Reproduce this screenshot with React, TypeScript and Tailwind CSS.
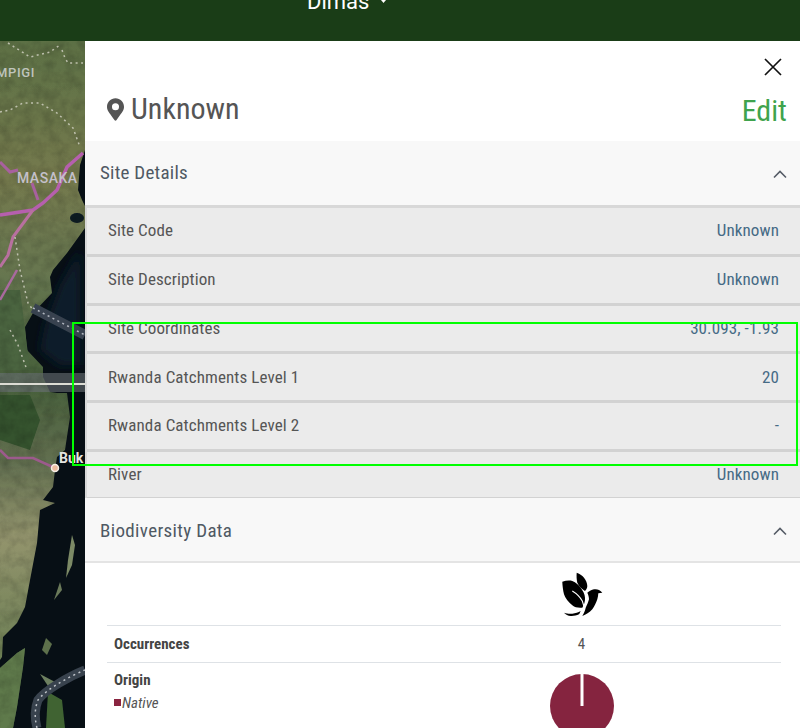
import React from "react";

function Row({ label, value, last }: { label: string; value: string; last?: boolean }) {
  return (
    <div
      className={
        last
          ? "flex h-[46px] items-center justify-between border-b border-[#d2d2d2] bg-[#ebebeb] px-[21px]"
          : "flex h-[48.8px] items-center justify-between border-b-[3px] border-[#d2d2d2] bg-[#ebebeb] px-[21px]"
      }
    >
      <span className="text-[17px] tracking-[0.1px] text-[#555]">{label}</span>
      <span className="text-[17px] tracking-[0.1px] text-[#456a85]">{value}</span>
    </div>
  );
}

function Chevron() {
  return (
    <svg width="16" height="10" viewBox="0 0 16 10" fill="none" stroke="#555c66" strokeWidth="1.6">
      <path d="M2 8.5 L8 2.5 L14 8.5" />
    </svg>
  );
}

const LAND =
  "M0 41H85V150L80 165 78 190 82 200 85 206V228L67 253 53 270 50 277 52 293 33 313 25 327 27 350 43 367 43 377 50 392 57 393 67 393 70 417 68 430 65 450 57 457 55 470 53 487 43 500 55 503 40 510 37 543 30 580 25 607 17 623 3 637 2 657 0 660Z";
const LAND2 = "M0 668L17 653 25 648 23 667 17 707 13 728H0Z";

function MapArt() {
  return (
    <svg width="85" height="687" viewBox="0 41 85 687" className="block shrink-0">
      <defs>
        <filter id="soft" x="-5%" y="-5%" width="110%" height="110%">
          <feGaussianBlur stdDeviation="0.7" />
        </filter>
        <filter id="softer" x="-20%" y="-20%" width="140%" height="140%">
          <feGaussianBlur stdDeviation="5" />
        </filter>
        <filter id="noise" x="0" y="0" width="100%" height="100%">
          <feTurbulence type="fractalNoise" baseFrequency="0.09" numOctaves="4" seed="5" />
          <feColorMatrix values="0 0 0 0 0  0 0 0 0 0  0 0 0 0 0  1.6 0 0 0 -0.55" />
        </filter>
        <clipPath id="landClip">
          <path d={LAND} />
          <path d={LAND2} />
        </clipPath>
        <linearGradient id="landGrad" x1="0" y1="0" x2="0" y2="1">
          <stop offset="0" stopColor="#5c7044" />
          <stop offset="0.22" stopColor="#757a4e" />
          <stop offset="0.38" stopColor="#667650" />
          <stop offset="0.55" stopColor="#465f3a" />
          <stop offset="0.68" stopColor="#626f50" />
          <stop offset="0.8" stopColor="#93946d" />
          <stop offset="1" stopColor="#6c7f54" />
        </linearGradient>
      </defs>
      <rect x="0" y="41" width="85" height="687" fill="#070f15" />
      <path d="M80 250 L60 285 45 325 40 350 60 365 80 365Z" fill="#0b1e2a" filter="url(#softer)" />
      <g filter="url(#soft)">
        <path d={LAND} fill="url(#landGrad)" />
        <path d={LAND2} fill="#66805099" />
        <path d="M0 668L17 653 25 648 23 667 17 707 13 728H0Z" fill="#5f7a4c" />
        <path d="M0 395H30L40 420 30 450 0 440Z" fill="#35522f" />
        <path d="M0 290H20L25 330 30 370H0Z" fill="#4b6541" />
        <path d="M48 692L62 700 65 728H46Z" fill="#3f6333" />
        <ellipse cx="77" cy="218" rx="7" ry="5" fill="#0d1a24" />
        <path d="M72 535L75 545 72 565 66 578 68 560Z" fill="#7c8a66" />
        <path d="M62 590L54 600 60 582Z" fill="#6b7a5a" />
        <path d="M46 638L52 644 47 655 42 650Z" fill="#5d6f4c" />
        <path d="M40 674L55 682 48 686Z" fill="#6d8060" />
        <rect y="373" width="85" height="19" fill="#6a7074" opacity="0.6" />
      </g>
      <rect x="0" y="41" width="85" height="687" filter="url(#noise)" clipPath="url(#landClip)" opacity="0.18" />
      <g filter="url(#soft)" fill="none">
        <path d="M83 153 67 167 57 190 43 203 33 210 0 215" stroke="#b65fae" strokeWidth="3.5" />
        <path d="M33 210 13 237 8 255 0 267" stroke="#b8709f" strokeWidth="3" />
        <path d="M17 270 0 300" stroke="#a9699f" strokeWidth="2.5" />
        <path d="M0 162 10 172 18 170" stroke="#a8609f" strokeWidth="3" />
        <path d="M32 183 38 200" stroke="#a8609f" strokeWidth="3" />
        <path d="M0 450 8 458 33 458 55 468" stroke="#9c5a8c" strokeWidth="2.5" />
        <path d="M33 308 85 335" stroke="#38434f" strokeWidth="10" />
        <path d="M85 670C70 676 45 690 38 700 34 710 35 720 37 728" stroke="#38424d" strokeWidth="9" />
      </g>
      <g fill="none" stroke="#cfcfc0" strokeWidth="1.5" strokeDasharray="2 3.5" opacity="0.85">
        <path d="M0 112 10 110 23 103 40 103 57 113 73 128 80 147" />
        <path d="M8 43 30 57 50 52 60 45" />
        <path d="M62 50 65 58 68 63 83 63" />
        <path d="M15 237 20 270 28 303 33 310" />
        <path d="M10 330 18 345 27 370" />
        <path d="M33 308 85 335" stroke="#c8ccd4" />
        <path d="M85 670C70 676 45 690 38 700 34 710 35 720 37 728" stroke="#d8dce0" />
      </g>
      <rect y="383" width="85" height="2" fill="#dcdcd4" />
      <circle cx="55" cy="468" r="3.5" fill="#eebca0" stroke="#f6efe6" strokeWidth="1.5" />
      <text x="35" y="77" textAnchor="end" fontSize="13" letterSpacing="0.6" fontFamily="Roboto" fontWeight="500" fill="#bfc4bc" style={{ fontStretch: "100%" }}>MPIGI</text>
      <text x="17" y="183" fontSize="14" letterSpacing="0.5" fontFamily="Roboto" fontWeight="500" fill="#c4c0ca" style={{ fontStretch: "100%" }}>MASAKA</text>
      <text x="59" y="463" fontSize="14" fontFamily="Roboto" fontWeight="700" fill="#e4e4e0" style={{ fontStretch: "100%" }}>Buk</text>
    </svg>
  );
}

export default function App() {
  return (
    <div className="relative h-[728px] w-[800px] overflow-hidden bg-white font-['Roboto',sans-serif] [font-stretch:75%]">
      <div className="flex h-[41px] items-start bg-[#1a3d17] pl-[307px]">
        <span className="mt-[-11px] text-[22px] leading-[26px] text-white [font-stretch:100%]">Dimas</span>
        <svg className="ml-[12px]" width="5" height="3" viewBox="0 0 5 3" fill="#fff"><path d="M0 0H5L2.5 3Z" /></svg>
      </div>
      <div className="flex h-[687px]">
        <MapArt />
        <div className="min-w-0 flex-1 overflow-hidden bg-white">
          <div className="relative h-[100px]">
            <svg className="absolute right-[18px] top-[17px]" width="18" height="18" viewBox="0 0 18 18" stroke="#111" strokeWidth="1.7"><path d="M1 1 L17 17 M17 1 L1 17" /></svg>
            <div className="absolute left-[22px] top-[50px] flex items-center gap-[7px] text-[#555]">
              <svg width="17" height="25" viewBox="0 0 384 512" fill="#555"><path d="M172 501C27 291 0 269 0 192 0 86 86 0 192 0s192 86 192 192c0 77-27 99-172 309-9 14-31 14-40 0zM192 272a80 80 0 1 0 0-160 80 80 0 0 0 0 160z" /></svg>
              <span className="text-[30px] leading-[36px]">Unknown</span>
            </div>
            <span className="absolute right-[13px] top-[52px] text-[30px] leading-[36px] text-[#3fa34d]">Edit</span>
          </div>
          <div className="flex h-[64px] items-center justify-between bg-[#f8f8f8] pl-[15px] pr-[12px] pt-[1px]">
            <span className="text-[19px] tracking-[0.25px] text-[#4f5963]">Site Details</span>
            <Chevron />
          </div>
          <div className="border-l-2 border-t-[3px] border-[#d8d8d8]">
            <Row label="Site Code" value="Unknown" />
            <Row label="Site Description" value="Unknown" />
            <Row label="Site Coordinates" value="30.093, -1.93" />
            <Row label="Rwanda Catchments Level 1" value="20" />
            <Row label="Rwanda Catchments Level 2" value="-" />
            <Row label="River" value="Unknown" last />
          </div>
          <div className="flex h-[65px] items-center justify-between border-b-2 border-[#e4e4e4] bg-[#f8f8f8] pl-[15px] pr-[12px] pt-[4px]">
            <span className="text-[19px] tracking-[0.35px] text-[#4f5963]">Biodiversity Data</span>
            <Chevron />
          </div>
          <div className="pl-[22px] pr-[19px]">
            <div className="flex h-[63px] justify-center border-b border-[#dee2e6] pl-[275px]">
              <div className="flex w-[399px] justify-center pt-[9px]">
                <svg width="42" height="46" viewBox="0 -1 42 46">
                  <path d="M1.3 8.7C5 7.5 8.5 7.3 11.3 8 15 9.5 17.8 12 19.7 14.7 22 18 23.8 21 24 24.7 24.3 28 23 32 21.3 34.7 17 35 14 34.5 11.3 32.3 7.5 29 4 25 3 21.3 2 17 1.5 13 1.3 8.7Z" fill="#000" />
                  <path d="M15.7 -0.3C19 1 21.5 2.5 23 4.7 25 7.5 26.3 10 26.3 13 26.3 15 25.3 16.7 24 18 20.5 16 18 13 16.3 9.7 15.6 6.5 15.4 3 15.7 -0.3Z" fill="#000" />
                  <path d="M26.3 19.7C28.5 18 30.5 16.8 33 16.3 35 16 36.5 16.2 38 17 39.3 17.8 40.5 18.7 41.3 19.7L37.3 20.3C37.2 22.5 36.9 24.3 36.3 26.3 35 30 33.5 33.5 31.3 36.3 28.5 39.5 25 41.5 21.3 43 23 40.5 24 37.5 24.7 34.7 26 32 27.3 29 28 26.3 28 24 27.3 21.7 26.3 19.7Z" fill="#000" />
                  <path d="M3 39.7C6 40.8 8.5 41 11.3 40.7 14.5 40.3 17.3 39.3 19.7 38 19 39.5 18.6 40.5 18 41.3 15.5 42.5 12.5 43.2 9.7 43 7 42.7 4.7 41.5 3 39.7Z" fill="#000" />
                  <path d="M11.3 18C15.5 20.5 19 24 21.3 28 22.5 31 23 33.5 23 36" fill="none" stroke="#fff" strokeWidth="1.1" />
                </svg>
              </div>
            </div>
            <div className="flex h-[37px] items-center border-b border-[#dee2e6]">
              <span className="w-[275px] pl-[7px] text-[15px] font-bold text-[#444]">Occurrences</span>
              <span className="w-[399px] text-center text-[15px] text-[#555]">4</span>
            </div>
            <div className="flex">
              <div className="w-[275px] pl-[7px] pt-[7px]">
                <div className="text-[15px] font-bold leading-[21px] text-[#444]">Origin</div>
                <div className="flex items-center text-[15px] italic leading-[24px] text-[#555]">
                  <span className="mr-[1px] h-[7px] w-[7px] bg-[#8a2440]" />
                  Native
                </div>
              </div>
              <div className="flex w-[399px] justify-center pt-[11px]">
                <svg width="64" height="64" viewBox="0 0 64 64">
                  <circle cx="32" cy="32" r="32" fill="#85243f" />
                  <rect x="30.5" y="0" width="3" height="32" fill="#fff" />
                </svg>
              </div>
            </div>
          </div>
        </div>
      </div>
      <div className="absolute left-[72px] top-[322px] h-[144px] w-[726px] border-2 border-[#00ff00]" />
    </div>
  );
}
